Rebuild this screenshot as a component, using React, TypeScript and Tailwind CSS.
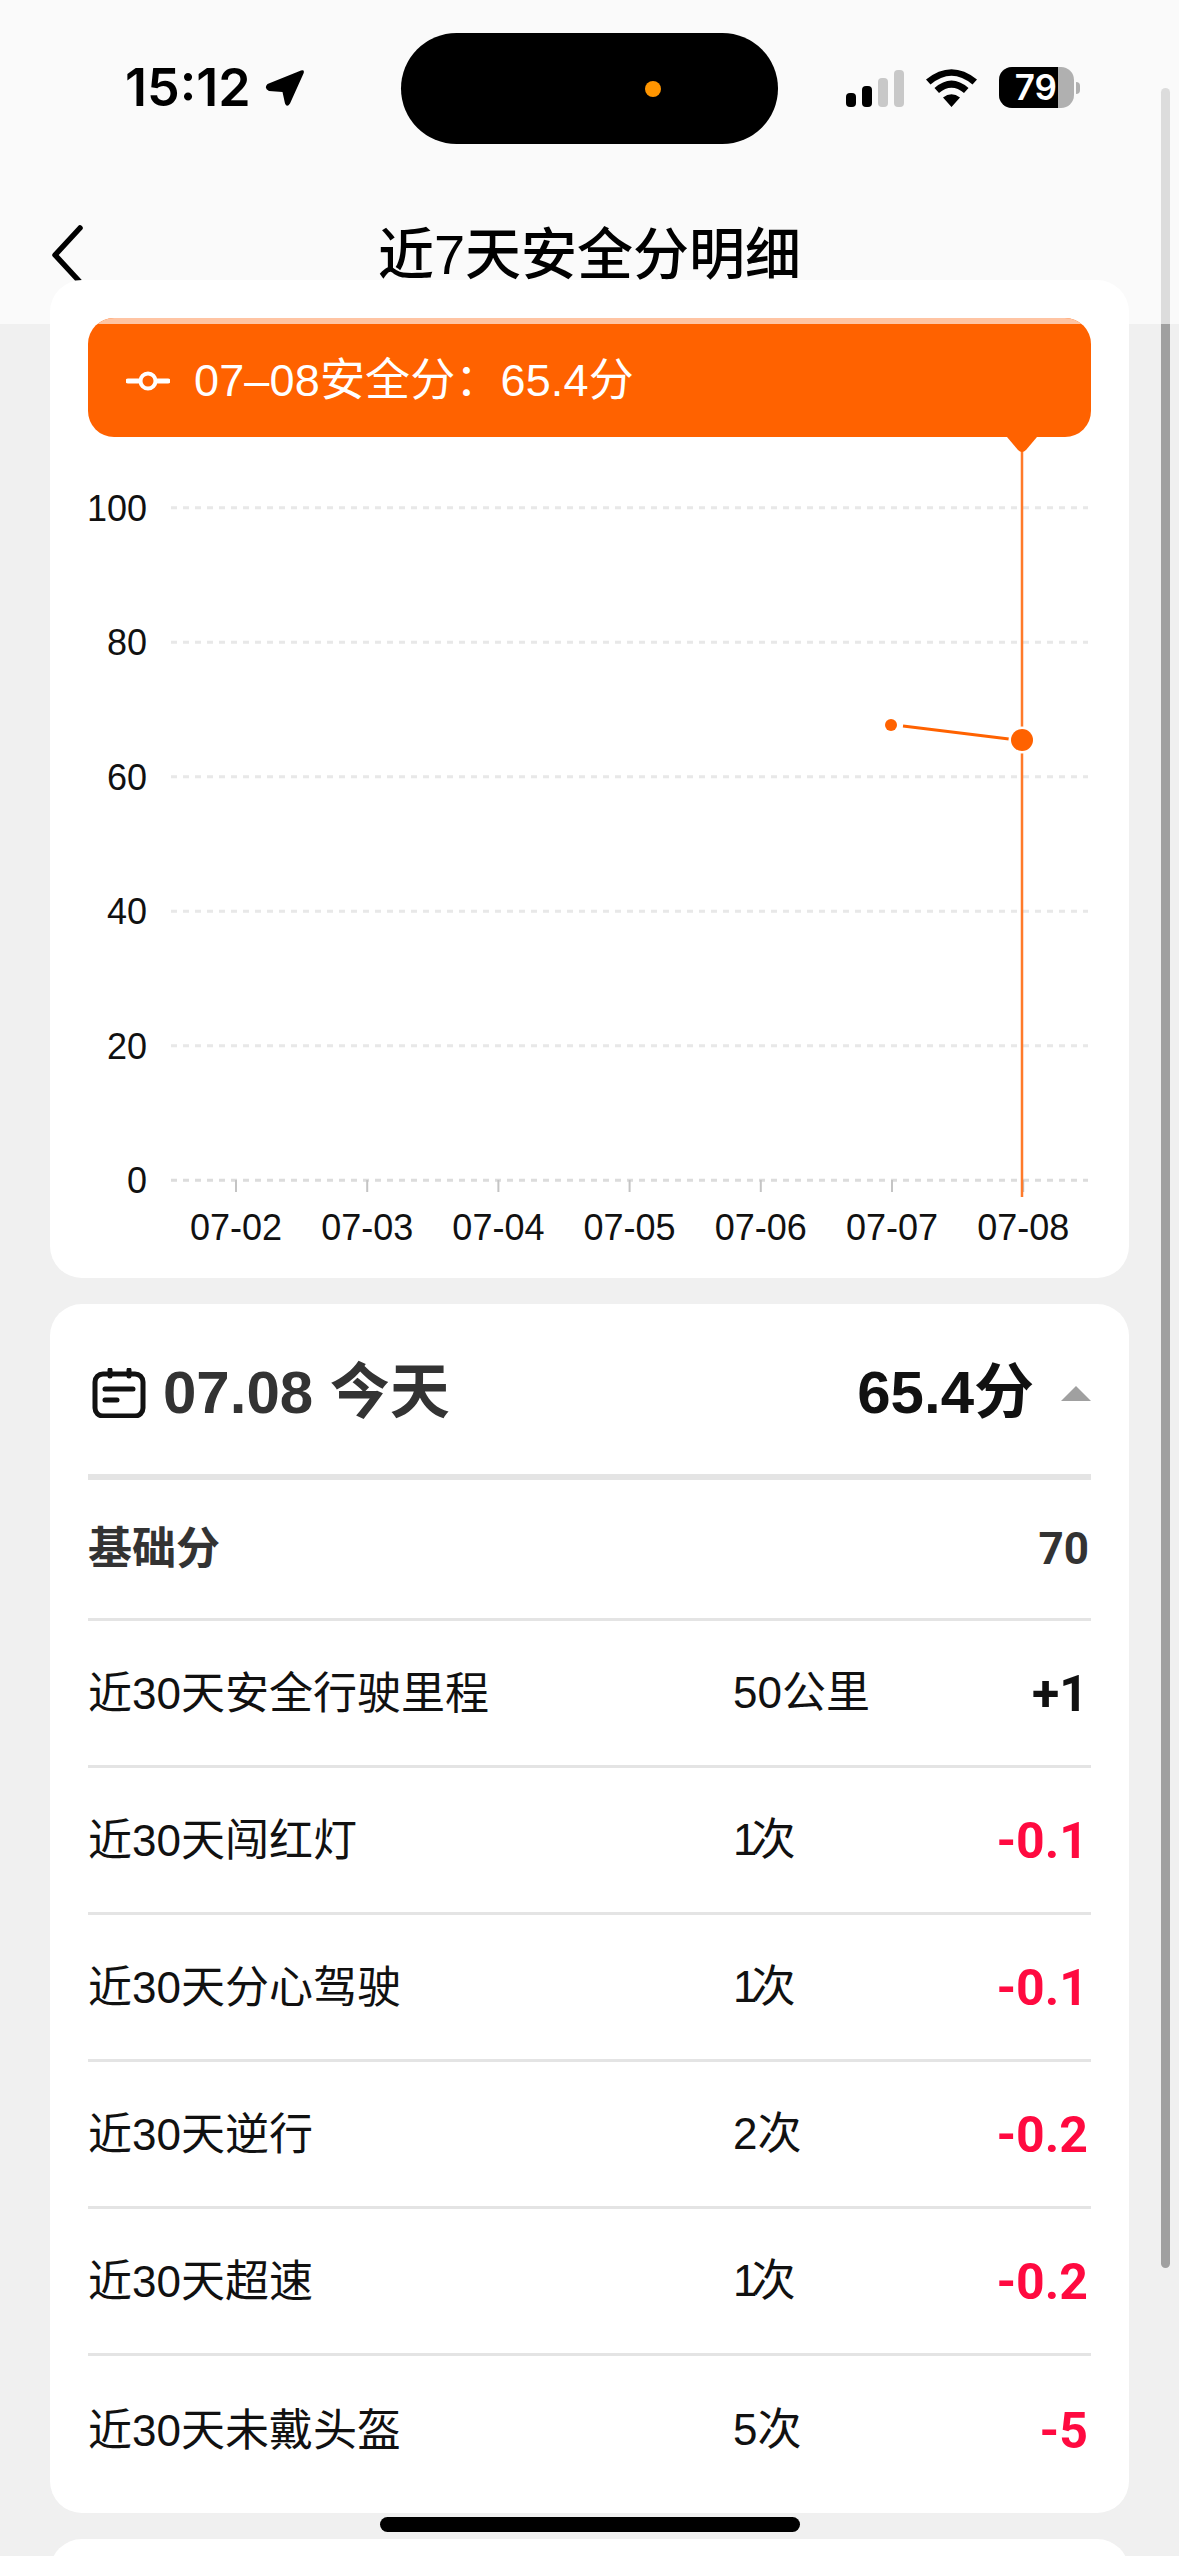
const latin = '[font-family:"Liberation_Sans","Noto_Sans_CJK_SC",sans-serif]'

type Row = { name: string; count: string; delta: string; bad?: boolean }

const rows: Row[] = [
  { name: '近30天安全行驶里程', count: '50公里', delta: '+1' },
  { name: '近30天闯红灯', count: '1次', delta: '-0.1', bad: true },
  { name: '近30天分心驾驶', count: '1次', delta: '-0.1', bad: true },
  { name: '近30天逆行', count: '2次', delta: '-0.2', bad: true },
  { name: '近30天超速', count: '1次', delta: '-0.2', bad: true },
  { name: '近30天未戴头盔', count: '5次', delta: '-5', bad: true }
]

const days = ['07-02', '07-03', '07-04', '07-05', '07-06', '07-07', '07-08']
const levels = [100, 80, 60, 40, 20, 0]

// chart svg origin sits at the card's top-left (50, 280)
const Chart = () => (
  <svg width="1079" height="998" viewBox="0 0 1079 998" className="block">
    {levels.map((v, i) => {
      const y = 227.7 + i * 134.5
      return (
        <g key={v}>
          <line x1="121" x2="1038" y1={y} y2={y} stroke={i === 5 ? '#dcdcdc' : '#e8e8e8'} strokeWidth="3" strokeDasharray="6 6" />
          <text x="97" y={y + 13} textAnchor="end" fontSize="36" fill="#111" fontFamily="Liberation Sans">
            {v}
          </text>
        </g>
      )
    })}
    {days.map((d, i) => {
      const x = 186 + i * 131.2
      return (
        <g key={d}>
          <line x1={x} x2={x} y1="900" y2="912" stroke="#c4c4c4" strokeWidth="2" />
          <text x={x} y="960" textAnchor="middle" fontSize="36" fill="#111" fontFamily="Liberation Sans">
            {d}
          </text>
        </g>
      )
    })}
    <line x1="972" x2="972" y1="165" y2="917" stroke="#ff7a2a" strokeWidth="2.5" />
    <line x1="853" y1="446" x2="959" y2="459" stroke="#ff6200" strokeWidth="3" />
    <circle cx="841" cy="445" r="6" fill="#ff6200" />
    <circle cx="972" cy="460" r="13.5" fill="#fff" />
    <circle cx="972" cy="460" r="11" fill="#ff6200" />
  </svg>
)

const App = () => {
  return (
    <div className={`relative h-[2556px] w-[1179px] overflow-hidden bg-[#f0f0f0] ${latin}`}>
      {/* Header */}
      <div className="relative h-[324px] bg-[#fafafa]">
        <div className="absolute left-[125px] top-[57px] flex items-center gap-[14px]">
          <span className="text-[52px] leading-[62px] font-semibold text-black [font-family:Inter,sans-serif]">15:12</span>
          <svg width="40" height="38" viewBox="0 0 40 38">
            <path d="M36 1.5 Q40 0.5 38.5 4.5 L25 34.5 Q22 39 20 34.5 L17.5 23 L4 22 Q-1.5 19 2.5 15 Z" fill="#000" />
          </svg>
        </div>
        <div className="absolute left-[401px] top-[33px] flex h-[111px] w-[377px] items-center rounded-full bg-black">
          <span className="ml-[244px] h-[16px] w-[16px] rounded-full bg-[#ff9500]" />
        </div>
        <div className="absolute left-[846px] top-[67px] flex items-center gap-[22px]">
          <div className="flex h-[39px] items-end gap-[6px]">
            <span className="h-[14px] w-[10px] rounded-[4px] bg-black" />
            <span className="h-[21px] w-[10px] rounded-[4px] bg-black" />
            <span className="h-[29px] w-[10px] rounded-[4px] bg-[#c8c8c8]" />
            <span className="h-[37px] w-[10px] rounded-[4px] bg-[#c8c8c8]" />
          </div>
          <svg width="51" height="38" viewBox="0 0 51 38">
            <path d="M25.5 38 L17 28.5 Q25.5 22 34 28.5 Z M13 24 L8.5 19 Q25.5 4 42.5 19 L38 24 Q25.5 13.5 13 24 Z M4.5 15.5 L0 10.5 Q25.5 -10 51 10.5 L46.5 15.5 Q25.5 -2 4.5 15.5 Z" fill="#000" />
          </svg>
          <div className="flex items-center gap-[2px]">
            <div className="flex h-[41px] w-[75px] overflow-hidden rounded-[13px] bg-[#b0b0b0]">
              <div className="flex h-full w-[59px] items-center justify-end bg-black pr-[1px]">
                <span className="text-[35px] leading-none font-semibold text-white [font-family:Inter,sans-serif]">79</span>
              </div>
            </div>
            <span className="h-[12px] w-[4px] rounded-r-full bg-[#b0b0b0]" />
          </div>
        </div>
        <div className="absolute left-0 right-0 top-[221px] flex justify-center">
          <span className="text-[56px] leading-[68px] font-medium text-black">近7天安全分明细</span>
        </div>
        <svg width="34" height="60" viewBox="0 0 34 60" className="absolute left-[50px] top-[225px]" fill="none" stroke="#000" strokeWidth="5.5" strokeLinecap="round" strokeLinejoin="round">
          <path d="M30 3 L5 30 L30 57" />
        </svg>
      </div>

      <div className="relative -mt-[44px] flex flex-col gap-[26px] px-[50px]">
        {/* Chart card */}
        <div className="relative h-[998px] rounded-[32px] bg-white">
          <Chart />
          <div className="absolute left-[38px] top-[38px] h-[119px] w-[1003px] overflow-hidden rounded-[26px] bg-[#ff6200]">
            <div className="h-[6px] bg-[#ffc4a3]" />
            <div className="flex h-[113px] items-center pl-[38px] text-white">
              <svg width="44" height="20" viewBox="0 0 44 20" className="mr-[24px]">
                <line x1="2" x2="42" y1="10" y2="10" stroke="#fff" strokeWidth="5" strokeLinecap="round" />
                <circle cx="22" cy="10" r="7.5" fill="#ff6200" stroke="#fff" strokeWidth="4" />
              </svg>
              <span className="text-[45px] leading-none tracking-[0.15px]">07–08安全分：65.4分</span>
            </div>
          </div>
          <svg width="30" height="16" viewBox="0 0 30 16" className="absolute left-[957px] top-[157px]">
            <path d="M0 0 H30 L19 13 Q15 17 11 13 Z" fill="#ff6200" />
          </svg>
        </div>

        {/* Day detail card */}
        <div className="h-[1209px] rounded-[32px] bg-white px-[38px]">
          <div className="flex h-[176px] items-center justify-between border-b-[6px] border-[#e4e4e4] pt-[8px]">
            <div className="flex items-center gap-[17px] pl-[4px]">
              <svg width="54" height="50" viewBox="0 0 54 50" fill="none" stroke="#111" strokeWidth="5" strokeLinecap="round">
                <rect x="3" y="6" width="48" height="42" rx="8" />
                <path d="M18 2 V8 M37 2 V8" />
                <path d="M13 21 H41 M13 32 H25" />
              </svg>
              <span className="text-[60px] leading-none font-bold text-[#333]">07.08 今天</span>
            </div>
            <div className="flex items-center gap-[27px]">
              <span className="text-[60px] leading-none font-bold text-[#111]">65.4分</span>
              <span className="h-0 w-0 border-x-[15px] border-b-[15px] border-x-transparent border-b-[#a0a0a0]" />
            </div>
          </div>
          <div className="flex h-[141px] items-center justify-between border-b-[3px] border-[#e4e4e4]">
            <span className="text-[44px] font-bold text-[#333]">基础分</span>
            <span className="pr-[2px] text-[44px] font-bold text-[#333] [font-family:Roboto,sans-serif]">70</span>
          </div>
          {rows.map((row, i) => (
            <div
              key={row.name}
              className={`flex h-[147px] items-center ${i < rows.length - 1 ? 'border-b-[3px] border-[#e4e4e4]' : ''}`}
            >
              <span className="mt-[2px] w-[645px] text-[44px] text-[#111]">{row.name}</span>
              <span className={`flex-1 text-[44px] text-[#111] ${row.count.startsWith('1') ? 'tracking-[-6px]' : ''}`}>{row.count}</span>
              <span className={`mt-[3px] pr-[3px] text-[50px] font-bold [font-family:Roboto,sans-serif] ${row.bad ? 'text-[#ff0a40]' : 'text-[#111]'}`}>{row.delta}</span>
            </div>
          ))}
        </div>

        {/* Next card, cut off by the screen edge */}
        <div className="h-[300px] rounded-[32px] bg-white" />
      </div>

      {/* Scrollbar */}
      <div className="absolute left-[1161px] top-[88px] h-[236px] w-[9px] rounded-t-full bg-[#dcdcdc]" />
      <div className="absolute left-[1161px] top-[324px] h-[1944px] w-[9px] rounded-b-full bg-[#a0a0a0]" />

      {/* Home indicator */}
      <div className="absolute left-[380px] top-[2517px] h-[15px] w-[420px] rounded-full bg-black" />
    </div>
  )
}

export default App
